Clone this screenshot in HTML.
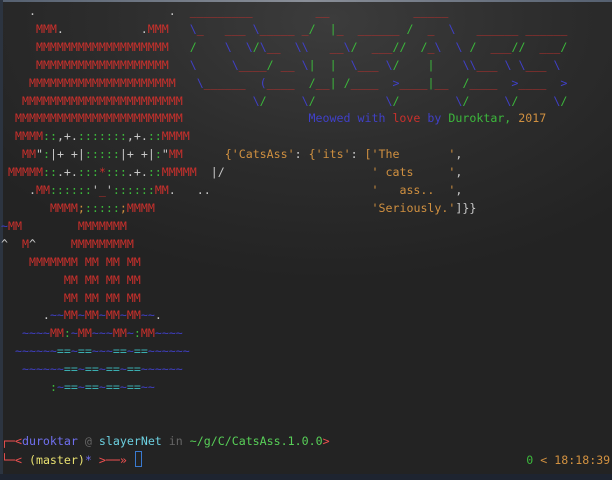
<!DOCTYPE html>
<html><head><meta charset="utf-8"><style>
html,body{margin:0;padding:0;}
body{width:612px;height:480px;overflow:hidden;position:relative;
background:radial-gradient(ellipse 420px 260px at 330px 20px,#3c3c3c 0%,#2c2c2c 55%,#232323 100%);}
.top{position:absolute;left:0;top:0;width:612px;height:2px;background:linear-gradient(90deg,#556070,#8a8f98 50%,#556070);}
.left{position:absolute;left:0;top:0;width:3px;height:480px;background:#2c3440;}
.bot{position:absolute;left:0;top:474px;width:612px;height:6px;background:#1e2430;}
pre{position:absolute;left:1px;top:3px;margin:0;font-family:"DejaVu Sans Mono","Liberation Mono",monospace;font-size:11.62px;line-height:17.9px;color:#c8c8c8;white-space:pre;}
.r{color:#c9302c}.b{color:#4040c8}.g{color:#3cb83c}.o{color:#d09040}.w{color:#c8c8c8}.t{color:#3aaeb0}
.p{color:#7070f0}.c{color:#6cd0e0}.d{color:#666}.gg{color:#58d058}.y{color:#e8e070}.pr{color:#f05050}
.cur{display:inline-block;width:5px;height:14px;border:1px solid #3a7ad0;vertical-align:-3px;margin-left:1px}
</style></head><body>
<div class="top"></div><div class="left"></div><div class="bot"></div>
<pre>    .                   .  <span class="r">_________</span>         <span class="r">__</span>            <span class="r">_____</span>
     <span class="r">MMM</span>.           .<span class="r">MMM</span>   <span class="b">\</span><span class="r">_</span>   <span class="r">___</span> <span class="b">\</span><span class="r">_____</span> <span class="r">_</span><span class="g">/</span>  <span class="g">|</span><span class="r">_</span>  <span class="r">______</span> <span class="g">/</span>  <span class="r">_</span>  <span class="b">\</span>   <span class="r">______</span> <span class="r">______</span>
     <span class="r">MMMMMMMMMMMMMMMMMMM</span>   <span class="g">/</span>    <span class="b">\</span>  <span class="b">\</span><span class="g">/</span><span class="b">\</span><span class="r">__</span>  <span class="b">\\</span>   <span class="r">__</span><span class="b">\</span><span class="g">/</span>  <span class="r">___</span><span class="g">//</span>  <span class="g">/</span><span class="r">_</span><span class="b">\</span>  <span class="b">\</span> <span class="g">/</span>  <span class="r">___</span><span class="g">//</span>  <span class="r">___</span><span class="g">/</span>
     <span class="r">MMMMMMMMMMMMMMMMMMM</span>   <span class="b">\</span>     <span class="b">\</span><span class="r">____</span><span class="g">/</span> <span class="r">__</span> <span class="b">\</span><span class="g">|</span>  <span class="g">|</span>  <span class="b">\</span><span class="r">___</span> <span class="b">\</span><span class="g">/</span>    <span class="g">|</span>    <span class="b">\\</span><span class="r">___</span> <span class="b">\</span> <span class="b">\</span><span class="r">___</span> <span class="b">\</span>
    <span class="r">MMMMMMMMMMMMMMMMMMMMM</span>   <span class="b">\</span><span class="r">______</span>  <span class="b">(</span><span class="r">____</span>  <span class="g">/</span><span class="r">__</span><span class="g">|</span> <span class="g">/</span><span class="r">____</span>  <span class="b">&gt;</span><span class="r">____</span><span class="g">|</span><span class="r">__</span>  <span class="g">/</span><span class="r">____</span>  <span class="b">&gt;</span><span class="r">____</span>  <span class="b">&gt;</span>
   <span class="r">MMMMMMMMMMMMMMMMMMMMMMM</span>          <span class="b">\</span><span class="g">/</span>     <span class="b">\</span><span class="g">/</span>          <span class="b">\</span><span class="g">/</span>        <span class="b">\</span><span class="g">/</span>     <span class="b">\</span><span class="g">/</span>     <span class="b">\</span><span class="g">/</span>
  <span class="r">MMMMMMMMMMMMMMMMMMMMMMMM</span>                  <span class="b">Meowed with</span> <span class="r">love</span> <span class="b">by</span> <span class="g">Duroktar,</span> <span class="o">2017</span>
  <span class="r">MMMM</span><span class="g">::</span>,+.<span class="g">:::::::</span>,+.<span class="g">::</span><span class="r">MMMM</span>
   <span class="r">MM</span>"<span class="g">:</span>|+ +|<span class="g">:::::</span>|+ +|<span class="g">:</span>"<span class="r">MM</span>      <span class="o">{'CatsAss'</span>: <span class="o">{'its'</span>: <span class="o">['The       '</span>,
 <span class="r">MMMMM</span><span class="g">::</span>.+.<span class="g">:::</span><span class="r">*</span><span class="g">:::</span>.+.<span class="g">::</span><span class="r">MMMMM</span>  |/                     <span class="o">' cats     '</span>,
    .<span class="r">MM</span><span class="g">::::::</span>'<span class="r">_</span>'<span class="g">::::::</span><span class="r">MM</span>.   ..                       <span class="o">'   ass..  '</span>,
       <span class="r">MMMM</span><span class="o">;</span><span class="g">:::::</span><span class="o">;</span><span class="r">MMMM</span>                               <span class="o">'Seriously.'</span>]}}
<span class="b">~</span><span class="r">MM</span>        <span class="r">MMMMMMM</span>
^  <span class="r">M</span>^     <span class="r">MMMMMMMMM</span>
    <span class="r">MMMMMMM MM MM MM</span>
         <span class="r">MM MM MM MM</span>
         <span class="r">MM MM MM MM</span>
      .<span class="b">~~</span><span class="r">MM</span><span class="b">~</span><span class="r">MM</span><span class="b">~</span><span class="r">MM</span><span class="b">~</span><span class="r">MM</span><span class="b">~~</span>.
   <span class="b">~~~~</span><span class="r">MM</span><span class="g">:</span><span class="b">~</span><span class="r">MM</span><span class="b">~~~</span><span class="r">MM</span><span class="b">~</span><span class="g">:</span><span class="r">MM</span><span class="b">~~~~</span>
  <span class="b">~~~~~~</span><span class="t">==</span><span class="b">~</span><span class="t">==</span><span class="b">~~~</span><span class="t">==</span><span class="b">~</span><span class="t">==</span><span class="b">~~~~~~</span>
   <span class="b">~~~~~~</span><span class="t">==</span><span class="b">~</span><span class="t">==</span><span class="b">~</span><span class="t">==</span><span class="b">~</span><span class="t">==</span><span class="b">~~~~~~</span>
       <span class="g">:</span><span class="b">~</span><span class="t">==</span><span class="b">~</span><span class="t">==</span><span class="b">~</span><span class="t">==</span><span class="b">~</span><span class="t">==</span><span class="b">~~</span>


<span class="pr">┌─&lt;</span><span class="p">duroktar</span> <span class="d">@</span> <span class="c">slayerNet</span> <span class="d">in</span> <span class="gg">~/g/C/CatsAss.1.0.0</span><span class="pr">&gt;</span>
<span class="pr">└─&lt;</span> <span class="y">(master)</span><span class="p">*</span> <span class="pr">&gt;──»</span> <span class="cur"></span>                                                       <span class="g">0</span> <span class="o">&lt; 18:18:39</span></pre>
</body></html>
